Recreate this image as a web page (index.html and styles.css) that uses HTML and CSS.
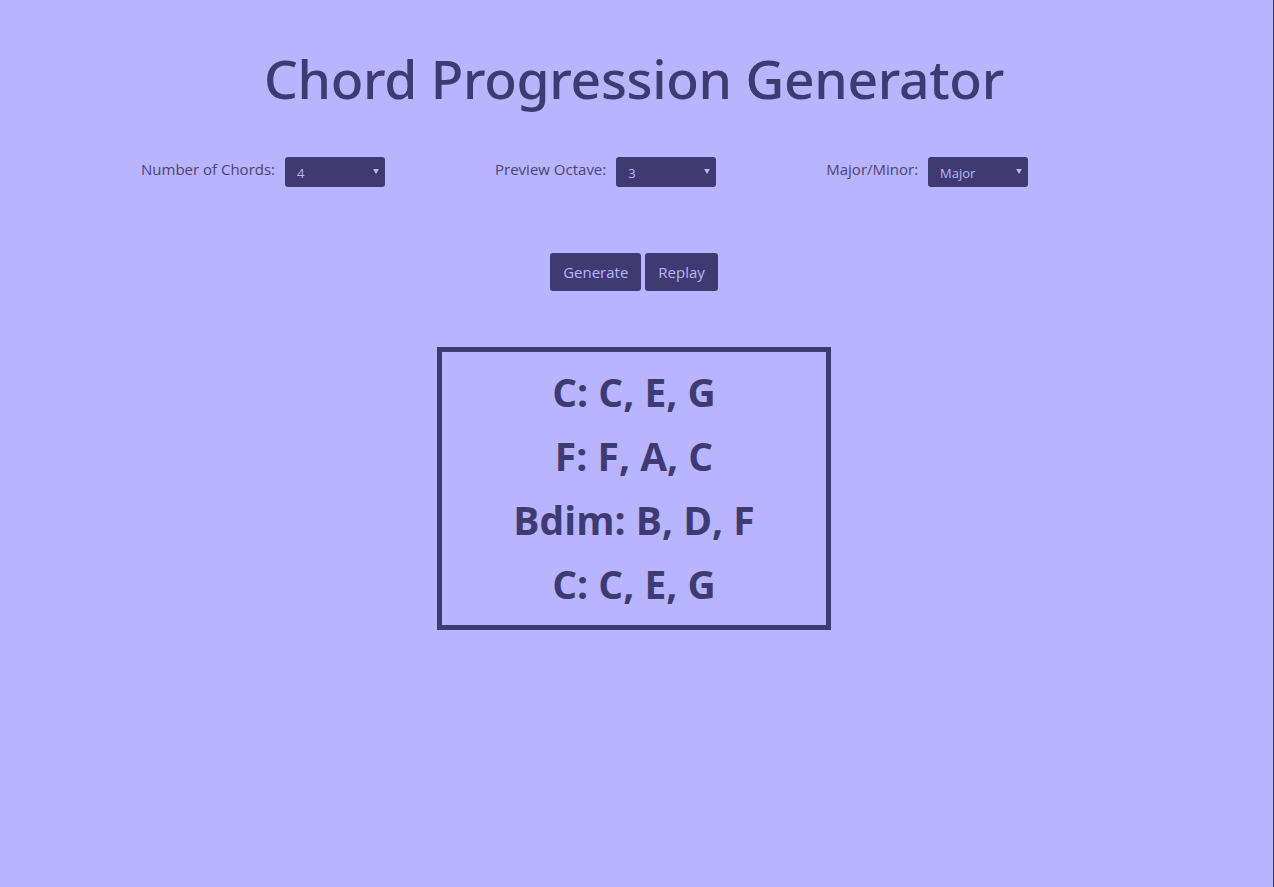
FILE: index.html
```html
<!DOCTYPE html>
<html>
<head>
<meta charset="utf-8">
<title>Chord Progression Generator</title>
<link rel="stylesheet" href="styles.css">
</head>
<body>
<div class="page">
  <h1 class="title">Chord Progression Generator</h1>
  <div class="controls">
    <div class="field">
      <label class="label">Number of Chords:</label>
      <span class="select-wrap"><select class="select"><option>4</option></select></span>
    </div>
    <div class="field">
      <label class="label">Preview Octave:</label>
      <span class="select-wrap"><select class="select"><option>3</option></select></span>
    </div>
    <div class="field">
      <label class="label">Major/Minor:</label>
      <span class="select-wrap"><select class="select"><option>Major</option></select></span>
    </div>
  </div>
  <div class="buttons">
    <button class="btn">Generate</button>
    <button class="btn">Replay</button>
  </div>
  <div class="result">
    <div class="chord">C: C, E, G</div>
    <div class="chord">F: F, A, C</div>
    <div class="chord">Bdim: B, D, F</div>
    <div class="chord">C: C, E, G</div>
  </div>
</div>
</body>
</html>
```

FILE: styles.css
```css
html, body {
  margin: 0;
  padding: 0;
  background: #b8b4fe;
}
body {
  font-family: "Open Sans", "Noto Sans", sans-serif;
  color: #3f3b72;
}
.page {
  min-height: 887px;
  box-sizing: border-box;
  border-right: 1px solid #3f3b72;
  padding-top: 40px;
  padding-right: 5px;
}
.title {
  margin: 0;
  text-align: center;
  font-family: "Noto Sans", "Open Sans", sans-serif;
  font-size: 53.4px;
  font-weight: 500;
  line-height: 78px;
  letter-spacing: -0.3px;
}
.controls {
  display: flex;
  gap: 110px;
  margin-top: 39px;
  padding-left: 141px;
}
.field {
  display: flex;
  align-items: center;
  gap: 10px;
}
.label {
  font-size: 15px;
  color: #4a4577;
  padding-bottom: 6px;
}
.select-wrap {
  position: relative;
  display: inline-block;
}
.select-wrap::after {
  content: "";
  position: absolute;
  right: 6px;
  top: 12px;
  border-left: 3px solid transparent;
  border-right: 3px solid transparent;
  border-top: 5px solid #b8b4fe;
  pointer-events: none;
}
.select {
  appearance: none;
  -webkit-appearance: none;
  width: 100px;
  height: 30px;
  border: none;
  border-radius: 3px;
  background: #3f3b72;
  color: #b8b4fe;
  font-family: "Open Sans", "Noto Sans", sans-serif;
  font-size: 13px;
  padding: 2px 12px 0;
  display: block;
}
.buttons {
  display: flex;
  justify-content: center;
  gap: 4px;
  margin-top: 66px;
}
.btn {
  height: 38px;
  border: none;
  border-radius: 3px;
  background: #3f3b72;
  color: #b8b4fe;
  font-family: "Open Sans", "Noto Sans", sans-serif;
  font-size: 15px;
  padding: 0 13px;
}
.result {
  width: 394px;
  box-sizing: border-box;
  margin: 56px auto 0;
  border: 5px solid #3f3b72;
  padding: 8px 0 9px;
  text-align: center;
}
.chord {
  font-size: 39px;
  font-weight: 700;
  line-height: 64px;
}
```
